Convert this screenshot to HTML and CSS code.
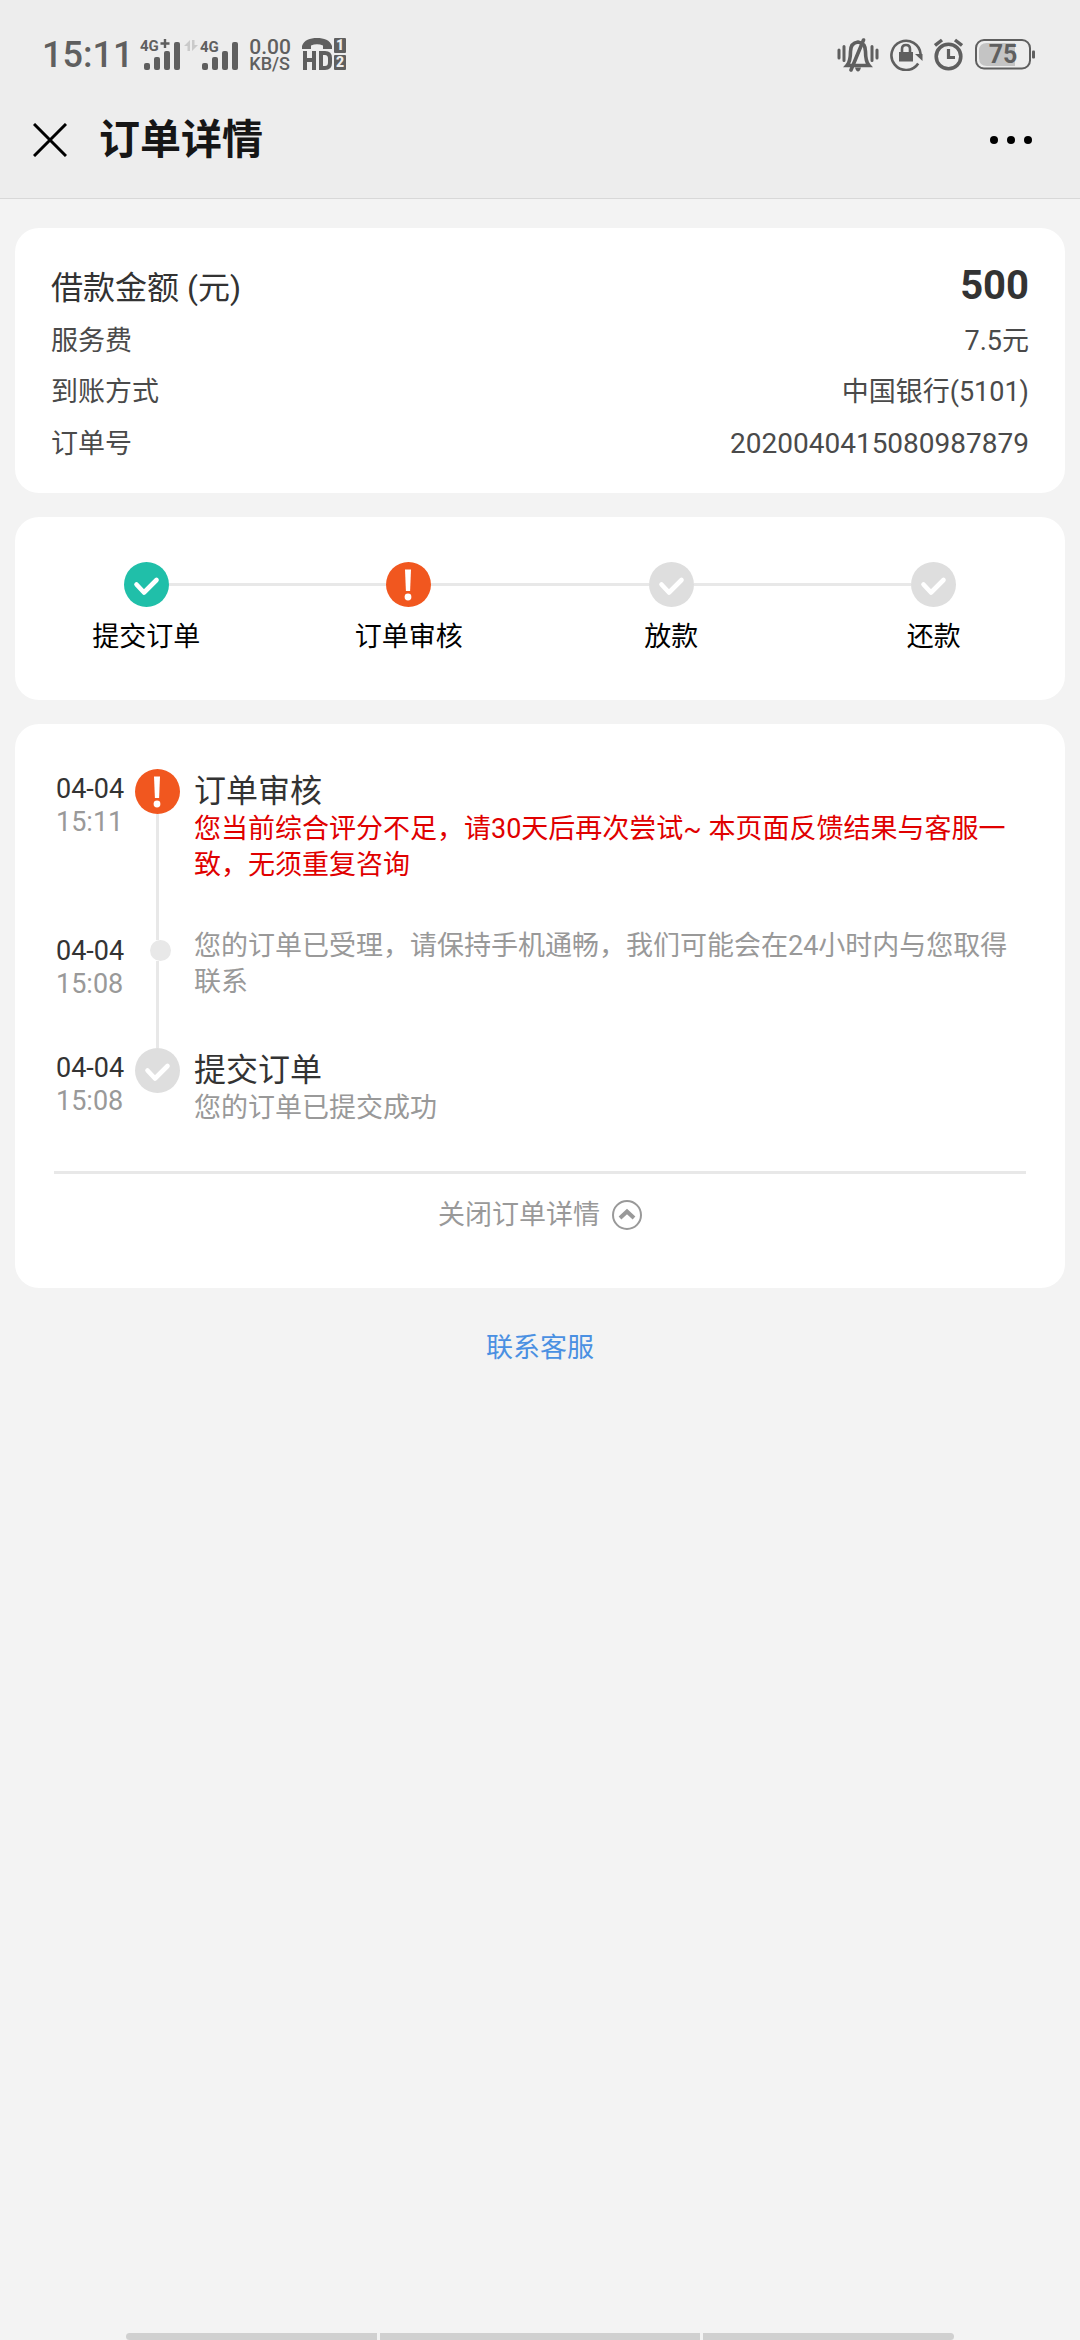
FILE: index.html
```html
<!DOCTYPE html>
<html lang="zh-CN">
<head>
<meta charset="utf-8">
<meta name="viewport" content="width=device-width, initial-scale=1">
<title>订单详情</title>
<link rel="stylesheet" href="styles.css">
</head>
<body>
<svg class="sprite" aria-hidden="true">
  <symbol id="check" viewBox="0 0 45 45">
    <circle cx="22.5" cy="22.5" r="22.5" fill="currentColor"/>
    <path d="M12.5 22.5 20 30.5 32.5 18" fill="none" stroke="#fff" stroke-width="4.6" stroke-linecap="round" stroke-linejoin="round"/>
  </symbol>
  <symbol id="alert" viewBox="0 0 45 45">
    <circle cx="22.5" cy="22.5" r="22.5" fill="currentColor"/>
    <path d="M19 7.5h6l-.9 21.5h-4.2z" fill="#fff"/>
    <circle cx="22" cy="35" r="3.4" fill="#fff"/>
  </symbol>
</svg>

<header class="header">
  <div class="status">
    <span class="clock">15:11</span>
    <svg class="signal" width="41" height="32" viewBox="0 0 41 32">
      <text x="0" y="12">4G</text>
      <path d="M25 0v9M20.500 4.500h9" stroke="currentColor" stroke-width="2.4"/>
      <rect x="4" y="24" width="6" height="7" rx="2"/><rect x="14" y="18" width="6" height="13" rx="2"/><rect x="24" y="12" width="6" height="19" rx="2"/><rect x="34" y="3" width="6" height="28" rx="2"/>
    </svg>
    <svg class="arrows" width="14" height="32" viewBox="0 0 14 32">
      <path d="M0 7 6 1v11H3.500V7zM14 6 8 12V1h2.500V6z"/>
    </svg>
    <svg class="signal signal-second" width="40" height="32" viewBox="0 0 40 32">
      <text x="0" y="13">4G</text>
      <rect x="2" y="24" width="6" height="7" rx="2"/><rect x="12" y="18" width="6" height="13" rx="2"/><rect x="22" y="12" width="6" height="19" rx="2"/><rect x="32" y="3" width="6" height="28" rx="2"/>
    </svg>
    <span class="speed"><span class="speed-value">0.00</span><span class="speed-unit">KB/S</span></span>
    <svg class="volte" width="45" height="33" viewBox="0 0 45 33">
      <path d="M0 11V8C2 2 8 0 15 0s13 2 15 8v3h-9V7.500Q15 5 9 7.500V11z"/>
      <path d="M1 13h4v7h5v-7h4v19h-4v-8H5v8H1z"/>
      <path fill-rule="evenodd" d="M17 13h6q7 0 7 7v5q0 7-7 7h-6zm4 4v11h2q3 0 3-3.500v-4q0-3.500-3-3.500z"/>
      <rect x="32" y="0" width="12" height="15" rx="1"/><rect x="32" y="17" width="12" height="15" rx="1"/>
      <text x="38" y="12">1</text><text x="38" y="29">2</text>
    </svg>
    <span class="spacer"></span>
    <svg class="bell" width="42" height="34" viewBox="0 0 42 34">
      <path d="M2 12v8M7 8.500v14M35 8.500v14M40 12v8" fill="none" stroke="currentColor" stroke-width="3" stroke-linecap="round"/>
      <path d="M10 27.500q3.500-4 3.500-14 0-8.500 7.500-9.500 7.500 1 7.500 9.500 0 10 3.500 14z" fill="none" stroke="currentColor" stroke-width="3.600"/>
      <path d="M14 32 26.500 2" fill="none" stroke="currentColor" stroke-width="3.600" stroke-linecap="round"/>
      <path d="M18 29.500h6q-1 4-3 4t-3-4z"/>
    </svg>
    <svg class="lock" width="33" height="33" viewBox="0 0 33 33">
      <path d="M28.200 25.500A14.600 14.600 0 1 1 30.600 16" fill="none" stroke="currentColor" stroke-width="2.600"/>
      <path d="M25 16h7.500v7z"/>
      <rect x="9" y="14" width="14" height="9.500"/>
      <path d="M12 15v-4q0-4 4-4t4 4v4" fill="none" stroke="currentColor" stroke-width="2.600"/>
    </svg>
    <svg class="alarm" width="29" height="33" viewBox="0 0 29 33">
      <circle cx="14.500" cy="18.500" r="12.300" fill="none" stroke="currentColor" stroke-width="3.600"/>
      <path d="M14.500 11v8.500H21" fill="none" stroke="currentColor" stroke-width="3.200"/>
      <path d="M1 7.500 8 2M28 7.500 21 2" fill="none" stroke="currentColor" stroke-width="3.400"/>
    </svg>
    <svg class="battery" width="61" height="31" viewBox="0 0 61 31">
      <path d="M12 4h28v23H12q-8 0-8-8v-7q0-8 8-8z" fill="#c4c4c4"/>
      <rect x="1" y="1" width="54" height="28.500" rx="8" fill="none" stroke="currentColor" stroke-width="2"/>
      <rect x="57" y="11.500" width="3" height="8" rx="1"/>
      <text x="28" y="24">75</text>
    </svg>
  </div>
  <div class="titlebar">
    <button class="icon-button" type="button" aria-label="关闭">
      <svg width="34" height="34" viewBox="0 0 34 34"><path d="M1 1 33 33M33 1 1 33" stroke="currentColor" stroke-width="3"/></svg>
    </button>
    <h1 class="title">订单详情</h1>
    <button class="icon-button" type="button" aria-label="更多">
      <svg width="42" height="8" viewBox="0 0 42 8"><circle cx="4" cy="4" r="4"/><circle cx="21" cy="4" r="4"/><circle cx="38" cy="4" r="4"/></svg>
    </button>
  </div>
</header>

<main class="content">
  <dl class="card summary">
    <div class="row row-amount"><dt>借款金额 (元)</dt><dd>500</dd></div>
    <div class="row"><dt>服务费</dt><dd>7.5元</dd></div>
    <div class="row"><dt>到账方式</dt><dd>中国银行(5101)</dd></div>
    <div class="row"><dt>订单号</dt><dd class="number">2020040415080987879</dd></div>
  </dl>

  <ol class="card steps">
    <li class="step"><span class="track"><svg class="badge done"><use href="#check"/></svg></span>提交订单</li>
    <li class="step"><span class="track"><svg class="badge failed"><use href="#alert"/></svg></span>订单审核</li>
    <li class="step"><span class="track"><svg class="badge"><use href="#check"/></svg></span>放款</li>
    <li class="step"><span class="track"><svg class="badge"><use href="#check"/></svg></span>还款</li>
  </ol>

  <section class="card history">
    <ol class="timeline">
      <li class="event">
        <div class="when"><span>04-04</span><span class="hour">15:11</span></div>
        <div class="rail"><svg class="badge failed"><use href="#alert"/></svg><span class="line"></span></div>
        <div class="what"><h2>订单审核</h2><p class="error">您当前综合评分不足，请30天后再次尝试~ 本页面反馈结果与客服一致，无须重复咨询</p></div>
      </li>
      <li class="event event-minor">
        <div class="when"><span>04-04</span><span class="hour">15:08</span></div>
        <div class="rail"><span class="lead"></span><span class="dot"></span><span class="line"></span></div>
        <div class="what"><p>您的订单已受理，请保持手机通畅，我们可能会在24小时内与您取得联系</p></div>
      </li>
      <li class="event">
        <div class="when"><span>04-04</span><span class="hour">15:08</span></div>
        <div class="rail"><svg class="badge"><use href="#check"/></svg></div>
        <div class="what"><h2>提交订单</h2><p>您的订单已提交成功</p></div>
      </li>
    </ol>
    <button class="toggle" type="button">关闭订单详情
      <svg class="chevron" width="30" height="30" viewBox="0 0 30 30"><circle cx="15" cy="15" r="14" stroke-width="2"/><path d="M8 18 15 11.500 22 18" stroke-width="4"/></svg>
    </button>
  </section>

  <a class="support" href="#support">联系客服</a>
</main>

<div class="gesture"><span></span><span class="middle"></span><span></span></div>
</body>
</html>
```
FILE: styles.css
```css
* { box-sizing: border-box; }

body {
  display: flex;
  flex-direction: column;
  min-height: 100vh;
  margin: 0;
  background: #f3f3f3;
  color: #000;
  font-family: Roboto, "Noto Sans CJK SC", sans-serif;
  font-size: 27px;
  line-height: 36px;
}

h1, h2, p, dl, dd, ol { margin: 0; padding: 0; }
ol { list-style: none; }
svg { display: block; flex: none; fill: currentColor; }
button { padding: 0; border: 0; background: none; color: inherit; font: inherit; }
.sprite { position: absolute; width: 0; height: 0; }

/* Header */
.header { background: #ededed; border-bottom: 1px solid #d8d8d8; }

.status {
  display: flex;
  align-items: center;
  height: 82px;
  padding: 27px 44px 0 42px;
  color: #5f5f5f;
}
.clock { font-size: 36px; font-weight: 500; }
.signal { margin-left: 7px; overflow: visible; }
.signal text { font-size: 15px; font-weight: 700; }
.arrows { margin-left: 3px; color: #cacaca; }
.signal-second { margin-left: 2px; }
.speed { display: flex; flex-direction: column; margin-left: 9px; font-weight: 500; }
.speed-value { font-size: 21px; line-height: 17px; }
.speed-unit { font-size: 18px; line-height: 15px; }
.volte { margin-left: 11px; }
.volte text { fill: #ededed; font-size: 14px; font-weight: 900; text-anchor: middle; }
.spacer { flex: 1; }
.lock { margin-left: 11px; }
.alarm { margin-left: 11px; }
.battery { margin-left: 12px; }
.battery text { font-size: 25px; font-weight: 700; text-anchor: middle; }

.titlebar {
  display: flex;
  align-items: center;
  gap: 32px;
  height: 116px;
  padding: 0 48px 0 33px;
  color: #161616;
}
.title { flex: 1; font-size: 41px; line-height: 60px; font-weight: 700; }
.icon-button { color: #000; }

/* Cards */
.content {
  display: flex;
  flex-direction: column;
  gap: 24px;
  padding: 29px 15px 0;
}
.card { border-radius: 24px; background: #fff; }

.summary { padding: 28px 36px 23px; color: #4a4a4a; }
.row {
  display: flex;
  align-items: baseline;
  justify-content: space-between;
  line-height: 51px;
}
.row-amount { color: #333; font-size: 32px; line-height: 60px; }
.row-amount dt { line-height: 48px; }
.row-amount dd { font-size: 40px; font-weight: 700; }
.number { font-size: 28px; }

.badge { width: 45px; height: 45px; color: #dedede; }
.done { color: #20bfa9; }
.failed { color: #f1571f; }

.steps {
  display: grid;
  grid-template-columns: repeat(4, 1fr);
  padding: 45px 0;
}
.step { display: flex; flex-direction: column; gap: 12px; text-align: center; }
.track { display: flex; align-items: center; }
.track::before, .track::after { content: ""; flex: 1; height: 3px; background: #e8e8e8; }
.step:first-child .track::before, .step:last-child .track::after { background: none; }

.history { padding: 45px 39px 0; }
.timeline { border-bottom: 3px solid #e8e8e8; }
.event { display: grid; grid-template-columns: 79px 45px 1fr; padding-left: 2px; }
.when {
  display: flex;
  flex-direction: column;
  padding-top: 4px;
  color: #333;
  line-height: 33px;
}
.hour { color: #999; }
.rail { display: flex; flex-direction: column; align-items: center; }
.line { flex: 1; width: 3px; background: #e8e8e8; }
.lead { width: 3px; height: 12px; background: #e8e8e8; }
.dot { width: 21px; height: 21px; margin-left: 6px; border-radius: 50%; background: #e8e8e8; }
.what { padding: 2px 0 45px 14px; color: #999; }
.what h2 { color: #333; font-size: 32px; line-height: 40px; font-weight: 400; }
.error { color: #e00000; }
.event-minor .when { padding-top: 7px; }
.event-minor .what { padding: 0 0 48px 14px; }

.toggle {
  display: flex;
  align-items: center;
  justify-content: center;
  gap: 12px;
  width: 100%;
  height: 114px;
  padding-bottom: 33px;
  color: #999;
}
.chevron { fill: none; stroke: currentColor; }

.support { align-self: center; padding-top: 18px; color: #4a90e2; text-decoration: none; }

/* Gesture bar */
.gesture { display: flex; gap: 3px; height: 7px; margin: auto 126px 0; }
.gesture span { flex: 251; background: #d0d0d0; }
.gesture .middle { flex: 320; }
.gesture span:first-child { border-radius: 4px 0 0 4px; }
.gesture span:last-child { border-radius: 0 4px 4px 0; }
```
